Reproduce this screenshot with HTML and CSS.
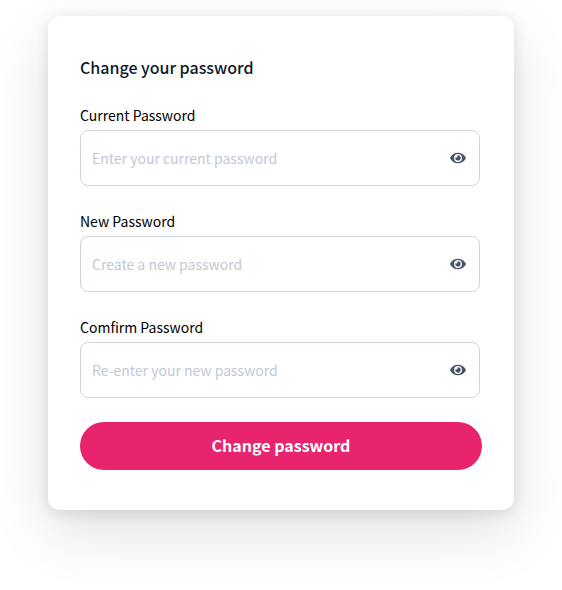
FILE: index.html
```html
<!DOCTYPE html>
<html lang="en">
<head>
<meta charset="utf-8">
<title>Change your password</title>
<link rel="stylesheet" href="styles.css">
</head>
<body>
<svg class="sprite" aria-hidden="true"><symbol id="eye" viewBox="0 0 576 512"><path d="M572.52 241.4C518.29 135.59 410.93 64 288 64S57.68 135.64 3.48 241.41a32.35 32.35 0 0 0 0 29.19C57.71 376.41 165.07 448 288 448s230.32-71.64 284.52-177.41a32.35 32.35 0 0 0 0-29.19zM288 400a144 144 0 1 1 144-144 143.93 143.93 0 0 1-144 144zm0-240a95.31 95.31 0 0 0-25.31 3.79 47.85 47.85 0 0 1-66.9 66.9A95.78 95.78 0 1 0 288 160z"/></symbol></svg>
<form class="card">
  <h1 class="title">Change your password</h1>
  <div class="field">
    <label class="label" for="current">Current Password</label>
    <div class="control">
      <input class="input" id="current" type="password" placeholder="Enter your current password">
      <svg class="eye"><use href="#eye"/></svg>
    </div>
  </div>
  <div class="field">
    <label class="label" for="new">New Password</label>
    <div class="control">
      <input class="input" id="new" type="password" placeholder="Create a new password">
      <svg class="eye"><use href="#eye"/></svg>
    </div>
  </div>
  <div class="field">
    <label class="label" for="confirm">Comfirm Password</label>
    <div class="control">
      <input class="input" id="confirm" type="password" placeholder="Re-enter your new password">
      <svg class="eye"><use href="#eye"/></svg>
    </div>
  </div>
  <button class="submit" type="button">Change password</button>
</form>
</body>
</html>
```
FILE: styles.css
```css
* { box-sizing: border-box; }
body {
  margin: 0;
  padding: 16px 48px;
  height: 590px;
  overflow: hidden;
  background: #fff;
  font-family: "Noto Sans CJK JP", sans-serif;
}
.sprite { display: none; }
.card {
  width: 466px;
  height: 494px;
  padding: 39px 32px 40px;
  border-radius: 12px;
  background: #fff;
  box-shadow: 0 3px 14px rgba(20, 25, 45, 0.12), 0 22px 60px rgba(0, 0, 0, 0.12);
}
.title {
  margin: 0 0 24px;
  font-size: 16px;
  font-weight: 500;
  line-height: 24px;
  color: #10182b;
}
.field { width: 400px; margin-bottom: 24px; }
.label {
  display: block;
  height: 27px;
  font-size: 14px;
  line-height: 24px;
  color: #000;
}
.field + .field .label {
  height: 26px;
  line-height: 23px;
}
.control {
  display: flex;
  align-items: center;
  height: 56px;
  padding: 0 13px 0 11px;
  border: 1px solid #cfd2df;
  border-radius: 8px;
}
.input {
  flex: 1;
  min-width: 0;
  padding: 0;
  border: 0;
  outline: 0;
  background: none;
  font: 14px/24px "Noto Sans CJK JP", sans-serif;
}
.input::placeholder { color: #c3c8d5; opacity: 1; }
.eye { width: 16px; height: 14px; fill: #475367; }
.submit {
  display: block;
  width: 402px;
  height: 48px;
  padding: 0 0 2px;
  border: 0;
  border-radius: 24px;
  background: #e8246f;
  color: #fff;
  font: 700 16px/24px "Noto Sans CJK JP", sans-serif;
}
```
